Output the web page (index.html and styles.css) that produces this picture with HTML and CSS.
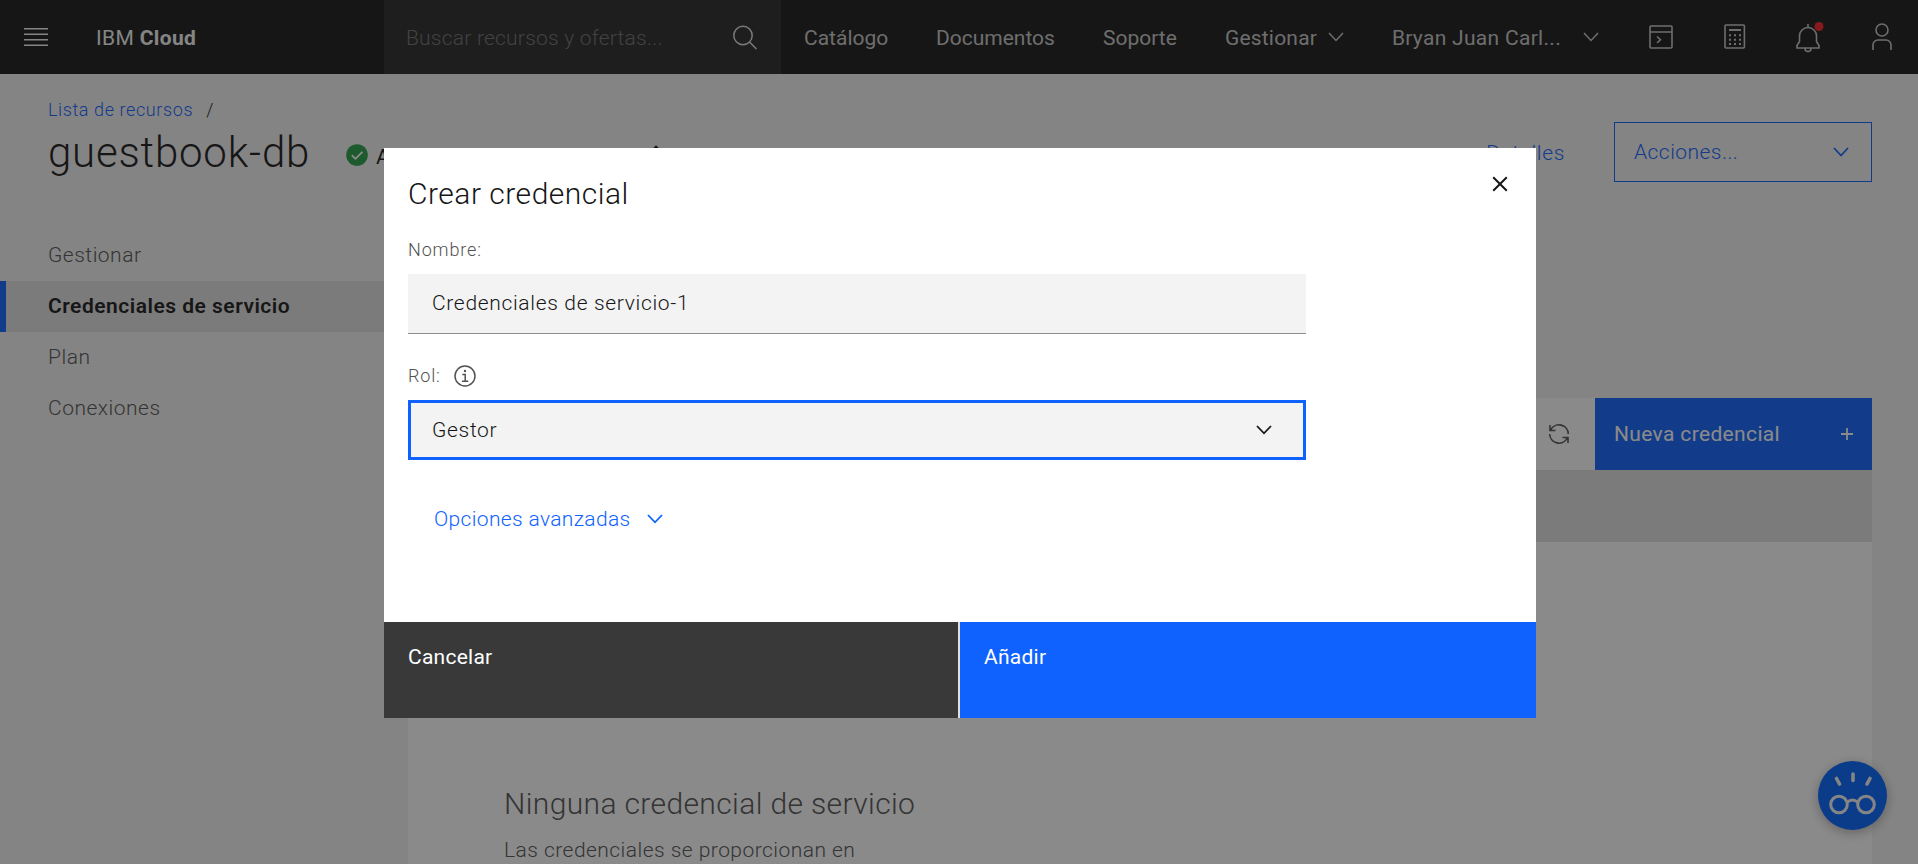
FILE: index.html
```html
<!DOCTYPE html>
<html lang="es">
<head>
<meta charset="utf-8">
<title>IBM Cloud</title>
<link rel="stylesheet" href="styles.css">
</head>
<body>
<header class="header">
  <div class="brand-area">
    <svg class="menu-icon" width="24" height="18" viewBox="0 0 24 18"><path d="M0 .75h24M0 6.25h24M0 11.75h24M0 17.25h24" stroke="#f4f4f4" stroke-width="1.5"/></svg>
    <span class="brand">IBM <b>Cloud</b></span>
  </div>
  <div class="search">
    <span>Buscar recursos y ofertas...</span>
    <svg width="26" height="26" viewBox="0 0 26 26" fill="none" stroke="#e0e0e0" stroke-width="1.5"><circle cx="11" cy="10.5" r="9.2"/><path d="M17.5 17l7 7"/></svg>
  </div>
  <nav class="nav">
    <a class="nav-catalog">Catálogo</a>
    <a class="nav-docs">Documentos</a>
    <a class="nav-support">Soporte</a>
    <a class="nav-manage">Gestionar <svg class="chev" width="16" height="10" viewBox="0 0 16 10"><path d="M1 1l7 7.5L15 1"/></svg></a>
    <a class="nav-account"><span>Bryan Juan Carl...</span> <svg class="chev" width="16" height="10" viewBox="0 0 16 10"><path d="M1 1l7 7.5L15 1"/></svg></a>
  </nav>
  <div class="tools">
    <svg width="30" height="30" viewBox="0 0 30 30"><rect x="4" y="4" width="22" height="22" rx="1"/><path d="M4 10h22M11 14.5l3.5 3.2L11 21"/></svg>
    <svg width="30" height="30" viewBox="0 0 30 30"><rect x="5" y="3" width="19.4" height="23" rx="1"/><path d="M9 8h12" stroke-width="2"/><path d="M9 13.2h12M9 17.7h12M9 22h12" stroke-width="2" stroke-dasharray="2 3"/></svg>
    <svg width="30" height="30" viewBox="0 0 30 30"><path d="M15 2v4M4 26v-2.5l2.5-4V14a8.5 8.5 0 0 1 17 0v5.5l2.5 4V26zM12 26.5a3 3 0 0 0 6 0"/><circle cx="26" cy="4.5" r="4.5" fill="#fa1f28" stroke="none"/></svg>
    <svg width="30" height="30" viewBox="0 0 30 30"><circle cx="15" cy="8" r="6"/><path d="M6 28v-5a5 5 0 0 1 5-5h8a5 5 0 0 1 5 5v5"/></svg>
  </div>
</header>
<section class="page-head">
  <div class="crumbs"><a>Lista de recursos</a><span>/</span></div>
  <div class="title-row">
    <h1>guestbook-db</h1>
    <svg class="status" width="22" height="22" viewBox="0 0 22 22"><circle cx="11" cy="11" r="10.8" fill="#24a148"/><path d="M5.8 11.2l3.6 3.6 7-7" fill="none" stroke="#fff" stroke-width="1.8"/></svg>
    <span class="status-text">Activo</span>
    <span class="tags">Añadir etiquetas</span>
    <svg class="pencil" width="24" height="24" viewBox="0 0 24 24"><path d="M5 14L16 2.5l4.5 4.5L9 18.500H5z"/></svg>
    <a class="details">Detalles</a>
    <button class="actions">Acciones... <svg width="16" height="10" viewBox="0 0 16 10"><path d="M1 1l7 7.5L15 1"/></svg></button>
  </div>
</section>
<div class="body-row">
  <nav class="side">
    <a>Gestionar</a>
    <a class="selected">Credenciales de servicio</a>
    <a>Plan</a>
    <a>Conexiones</a>
  </nav>
  <main class="table">
    <div class="toolbar">
      <svg class="refresh" width="22" height="22" viewBox="0 0 22 22"><path d="M20.3 11A9.3 9.3 0 0 0 2.8 6.8M2 2v5.5h5.5M1.7 11a9.3 9.3 0 0 0 17.5 4.2M20 20v-5.500h-5.5"/></svg>
      <button class="new">Nueva credencial <svg width="12" height="12" viewBox="0 0 12 12"><path d="M6 0v12M0 6h12"/></svg></button>
    </div>
    <div class="table-head"></div>
    <div class="empty">
      <h2>Ninguna credencial de servicio</h2>
      <p>Las credenciales se proporcionan en</p>
    </div>
  </main>
</div>
<div class="fab">
  <svg width="69" height="69" viewBox="0 0 69 69"><g fill="none" stroke="#f4f4f4" stroke-width="3"><circle cx="21" cy="43.5" r="8.3"/><circle cx="48" cy="43.5" r="8.3"/><path d="M29 41.5q5.5-5 11 0"/><path d="M18.5 17.5l3 5.5M35 13v6.5M52 17.5L49 23" stroke-width="3.6" stroke-linecap="round"/></g></svg>
</div>
<div class="overlay">
  <div class="modal">
    <div class="modal-body">
      <div class="modal-head"><h3>Crear credencial</h3>
        <svg class="close" width="16" height="16" viewBox="0 0 16 16"><path d="M1.2 1.2l13.6 13.6M14.8 1.2L1.2 14.8"/></svg>
      </div>
      <label class="label-name">Nombre:</label>
      <div class="field">Credenciales de servicio-1</div>
      <label class="label-role">Rol: <svg width="24" height="24" viewBox="0 0 24 24"><circle cx="12" cy="12" r="10" fill="none" stroke="#525252" stroke-width="1.5"/><circle cx="12" cy="7" r="1.2" fill="#525252"/><path d="M9.3 10.5h2.9v6.4M9 17.2h6.3" fill="none" stroke="#525252" stroke-width="1.5"/></svg></label>
      <div class="field select">Gestor <svg width="16" height="10" viewBox="0 0 16 10"><path d="M1 1l7 7.3L15 1"/></svg></div>
      <a class="advanced">Opciones avanzadas <svg width="16" height="10" viewBox="0 0 16 10"><path d="M1 1l7 7.3L15 1"/></svg></a>
    </div>
    <div class="modal-foot"><button class="cancel">Cancelar</button><button class="add">Añadir</button></div>
  </div>
</div>
</body>
</html>
```
FILE: styles.css
```css
* { box-sizing: border-box; }
body {
  margin: 0;
  height: 864px;
  overflow: hidden;
  background: #f3f3f3;
  color: #161616;
  font-family: Roboto, "Noto Sans", sans-serif;
  font-size: 21px;
  line-height: 28px;
  font-weight: 300;
}
h1, h2, h3, p { margin: 0; font-weight: 300; }
svg { flex: none; display: block; fill: none; }
button { border: 0; font: inherit; text-align: left; margin: 0; }
a, span, button, h1, h2, h3, p, label { white-space: nowrap; }

.header { height: 74px; background: #161616; display: flex; align-items: center; color: #c6c6c6; font-weight: 400; }
.brand-area { width: 384px; padding: 2px 0 0 24px; display: flex; align-items: center; }
.menu-icon { margin-top: -2px; }
.brand { margin-left: 48px; color: #f4f4f4; letter-spacing: .35px; }
.brand b { font-weight: 700; }
.search { width: 397px; height: 74px; background: #262626; display: flex; align-items: center; justify-content: space-between; padding: 1px 23px 0 22px; color: #6f6f6f; font-weight: 300; letter-spacing: .22px; }
.nav { width: 818px; display: flex; padding: 1px 0 0 23px; }
.nav a { display: flex; align-items: center; }
.nav-catalog { width: 132px; }
.nav-docs { width: 167px; }
.nav-support { width: 122px; }
.nav-manage { width: 167px; gap: 11px; letter-spacing: .2px; }
.nav-account { gap: 22px; letter-spacing: .3px; }
.chev { stroke: #c6c6c6; stroke-width: 1.5; margin-top: -2px; }
.tools { display: flex; gap: 43.7px; margin-left: 47px; }
.tools svg { stroke: #c6c6c6; stroke-width: 1.6; overflow: visible; }

.page-head { height: 155px; padding: 22px 46px 0 48px; }
.crumbs { display: flex; gap: 13px; font-size: 18px; line-height: 28px; letter-spacing: .6px; }
.crumbs a, .details { color: #0f62fe; }
.title-row { display: flex; align-items: center; height: 60px; margin-top: -2px; }
h1 { font-size: 42px; line-height: 60px; letter-spacing: .8px; width: 298px; padding-top: 1px; }
.status { margin-top: 6px; }
.status-text { width: 83px; }
.status-text, .tags { margin-top: 9px; margin-left: 8px; letter-spacing: .45px; font-weight: 400; }
.tags { width: 165px; }
.pencil { stroke: #161616; stroke-width: 1.8; margin-top: 8px; margin-left: 8px; }
.details { margin-left: auto; letter-spacing: .65px; padding-top: 1px; }
.actions { width: 258px; height: 60px; margin-left: 49px; border: 1px solid #0f62fe; background: transparent; color: #0f62fe; display: flex; align-items: center; justify-content: space-between; padding: 0 22px 0 19px; letter-spacing: .45px; }
.actions svg { stroke: #0f62fe; stroke-width: 1.8; }

.body-row { display: flex; padding-top: 1px; }
.side { width: 408px; color: #525252; letter-spacing: .5px; }
.side a { display: flex; align-items: center; height: 51px; padding: 0 0 1px 48px; }
.side a.selected { background: #e0e0e0; color: #161616; font-weight: 600; border-left: 6px solid #0f62fe; padding-left: 42px; width: 384px; }
.table { width: 1464px; padding-top: 168px; }
.toolbar { height: 72px; background: #fff; display: flex; align-items: center; justify-content: flex-end; }
.refresh { stroke: #525252; stroke-width: 1.6; margin-right: 25px; }
.new { width: 277px; height: 72px; background: #0f62fe; color: #fff; display: flex; align-items: center; justify-content: space-between; padding: 0 19px 0 19px; font-weight: 400; letter-spacing: .35px; }
.new svg { stroke: #fff; stroke-width: 1.8; }
.table-head { height: 72px; background: #e0e0e0; }
.empty { height: 322px; background: #fff; padding: 242px 0 0 96px; color: #525252; }
.empty h2 { font-size: 30px; line-height: 40px; letter-spacing: .37px; }
.empty p { margin-top: 12px; letter-spacing: .46px; }

.fab { position: absolute; left: 1818px; top: 761px; width: 69px; height: 69px; border-radius: 50%; background: #0062ff; box-shadow: 0 3px 12px rgba(0,0,0,.3); }

.overlay { position: fixed; inset: 0; background: rgba(22,22,22,.5); padding: 148px 0 0 384px; }
.modal { width: 1152px; height: 570px; background: #fff; display: flex; flex-direction: column; }
.modal-body { height: 474px; padding: 25px 24px 0; display: flex; flex-direction: column; align-items: flex-start; }
.modal-head { display: flex; justify-content: space-between; width: 1100px; height: 40px; }
h3 { font-size: 30px; line-height: 42px; letter-spacing: .5px; }
.close { stroke: #161616; stroke-width: 2; margin-top: 3px; }
label { color: #525252; font-size: 18px; line-height: 24px; letter-spacing: .85px; }
.label-name { margin-top: 25px; margin-bottom: 12px; }
.field { width: 898px; height: 60px; background: #f3f3f3; border-bottom: 1px solid #8d8d8d; padding: 0 24px 1px; display: flex; align-items: center; letter-spacing: .67px; }
.label-role { display: flex; align-items: center; gap: 12px; margin: 30px 0 12px; }
.select { border: 3px solid #0f62fe; padding: 0 31px 0 21px; justify-content: space-between; }
.select svg { stroke: #161616; stroke-width: 1.8; }
.advanced { color: #0f62fe; display: flex; align-items: center; gap: 16px; margin: 45px 0 0 26px; letter-spacing: .35px; }
.advanced svg { stroke: #0f62fe; stroke-width: 1.8; }
.modal-foot { display: flex; gap: 2px; height: 96px; background: #e0e0e0; }
.modal-foot button { color: #fff; font-weight: 400; padding: 21px 24px 0; display: flex; letter-spacing: .25px; }
.cancel { width: 574px; background: #393939; }
.add { width: 576px; background: #0f62fe; }
```
